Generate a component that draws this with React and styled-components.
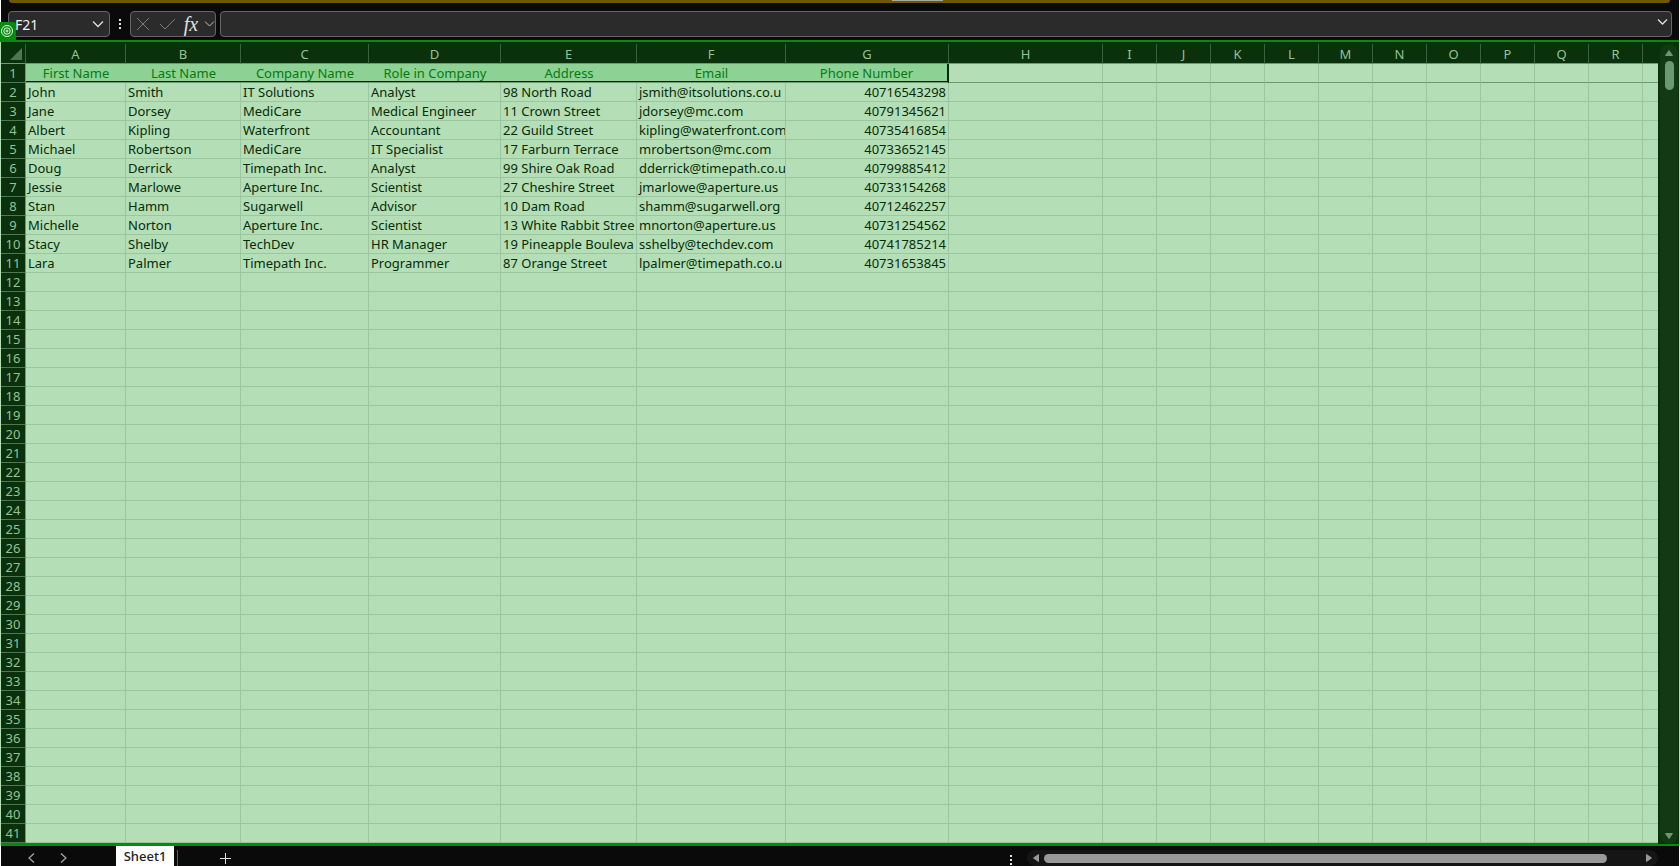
import React from "react";
import styled, { createGlobalStyle } from "styled-components";

const GlobalStyle = createGlobalStyle`
  * { box-sizing: border-box; }
  html { background: #0a0a0a; }
  body { margin: 0; background: #0a0a0a; overflow: hidden; font-family: "Noto Sans", "Open Sans", sans-serif; }
  button, input { font: inherit; color: inherit; background: none; border: 0; padding: 0; margin: 0; outline: none; }
  svg { display: block; flex: none; }
`;

const Window = styled.div`
  position: relative;
  border-left: 1px solid #ffffff;
  border-right: 1px solid #ffffff;
  min-height: 100vh;
  overflow: clip;
  overflow-clip-margin: 1px;
`;

const Banner = styled.div`
  display: flex;
  justify-content: center;
  height: 3px;
  margin: 0 9px 0 8px;
  background: #735600;
  border-radius: 0 0 4px 4px;
  padding-left: 155px;
`;

const BannerHandle = styled.div`
  width: 51px;
  height: 1px;
  background: #a8a8a8;
`;

const FormulaRow = styled.div`
  display: flex;
  align-items: center;
  height: 37px;
  padding: 5px 7px 0 7px;
`;

const Field = styled.div`
  display: flex;
  align-items: center;
  height: 26px;
  margin-right: ${(p) => p.$gap || "0"};
  border: 1px solid #666666;
  border-radius: 4px;
  background: #2b2b2b;
  color: #f2f2f2;
  width: ${(p) => p.$width || "auto"};
  flex: ${(p) => (p.$grow ? "1" : "none")};
  padding: ${(p) => p.$pad || "0"};
`;

const FormulaField = styled(Field)`
  align-items: flex-start;
`;

const TextInput = styled.input`
  flex: 1;
  min-width: 0;
  height: 24px;
  font-size: 14px;
`;

const IconButton = styled.button`
  display: flex;
  align-items: center;
  justify-content: center;
  width: ${(p) => p.$width || "24px"};
  height: ${(p) => p.$height || "24px"};
  color: ${(p) => p.$color || "#e0e0e0"};
`;

const Grip = styled.div`
  display: flex;
  flex-direction: column;
  align-items: center;
  gap: 2px;
  width: 20px;
  i { width: 2px; height: 2px; background: #e4e4e4; }
`;

const Badge = styled.div`
  position: absolute;
  left: -1px;
  top: 22px;
  width: 16px;
  height: 20px;
  padding-top: 2px;
  background: #078a0f;
  border-radius: 0 3px 0 0;
`;

const Workspace = styled.main`
  display: flex;
  border-top: 2px solid #078a0f;
  border-bottom: 2px solid #078a0f;
  background: #0a300c;
  box-shadow: -1px 0 0 #b4deb5, 1px 0 0 #b4deb5;
`;

const GridArea = styled.div`
  flex: 1;
  min-width: 0;
  padding-top: 2px;
  overflow: hidden;
  border-bottom: 1px solid #35653a;
`;

const Sheet = styled.table`
  width: 100%;
  table-layout: fixed;
  border-collapse: separate;
  border-spacing: 0;
  background: #b4deb5;
  color: #082c0b;
  font-size: 13px;
  line-height: 18px;
`;

const Row = styled.tr`
  height: 19px;
`;

const ColumnHead = styled.th`
  height: 20px;
  padding: 0;
  overflow: hidden;
  background: #0a300c;
  color: #92c396;
  font-weight: 400;
  border-right: 1px solid #3a633d;
  border-bottom: 1px solid #6d9a70;
  &:last-child { border-right: 0; }
`;

const RowHead = styled.th`
  padding: 0;
  background: #0a300c;
  color: #92c396;
  font-weight: 400;
  border-right: 1px solid #6d9a70;
  border-bottom: 1px solid #4d7850;
`;

const Cell = styled.td`
  height: 19px;
  padding: 0 2px;
  overflow: hidden;
  white-space: nowrap;
  text-align: ${(p) => (p.$right ? "right" : "left")};
  border-right: 1px solid #9cc6a0;
  border-bottom: 1px solid ${(p) => (p.$underHead ? "#6d9a70" : "#9cc6a0")};
  &:last-child { border-right: 0; }
`;

const TitleCell = styled(Cell)`
  background: #8dd294;
  color: #077a0e;
  text-align: center;
  border-right: ${(p) => (p.$end ? "2px solid #062a08" : "0")};
  border-bottom: 1px solid #6d9a70;
  box-shadow: inset 0 -1px 0 #062a08;
`;

const Corner = styled.div`
  display: flex;
  justify-content: flex-end;
  padding-right: 3px;
`;

const VerticalBar = styled.div`
  display: flex;
  flex-direction: column;
  align-items: center;
  width: 18px;
  margin: 2px 1px 0 2px;
  padding: 1px 0;
  border-radius: 9px;
  background: #123914;
`;

const VerticalThumb = styled.div`
  width: 9px;
  height: 29px;
  border-radius: 5px;
  background: #6b9970;
`;

const Spacer = styled.div`
  flex: 1;
`;

const Footer = styled.footer`
  display: flex;
  align-items: flex-start;
  height: 20px;
  padding: 0 21px 0 14px;
  background: #0a0a0a;
`;

const Tab = styled.button`
  width: 58px;
  height: 20px;
  margin-left: 37px;
  background: #ffffff;
  color: #222222;
  font-size: 13px;
  font-weight: 500;
  line-height: 20px;
`;

const Divider = styled.div`
  width: 1px;
  height: 16px;
  margin: 4px 32px 0 3px;
  background: #5c5c5c;
`;

const FooterGrip = styled(Grip)`
  margin: 9px 6px 0 0;
`;

const HorizontalBar = styled.div`
  display: flex;
  align-items: center;
  flex: 0 0 631px;
  height: 16px;
  margin-top: 4px;
  padding: 0 1px;
  border-radius: 8px;
  background: #151515;
`;

const HorizontalThumb = styled.div`
  width: 563px;
  height: 9px;
  border-radius: 5px;
  background: #999999;
`;

const Line = ({ w, h, d, sw = 1 }) => (
  <svg width={w} height={h} viewBox={`0 0 ${w} ${h}`} fill="none" stroke="currentColor" strokeWidth={sw} aria-hidden="true">
    <path d={d} />
  </svg>
);

const Solid = ({ w, h, d }) => (
  <svg width={w} height={h} viewBox={`0 0 ${w} ${h}`} fill="currentColor" stroke="currentColor" strokeLinejoin="round" aria-hidden="true">
    <path d={d} />
  </svg>
);

const FxLabel = styled.span`
  font-family: "Liberation Serif", serif;
  font-style: italic;
  font-size: 20px;
  line-height: 20px;
`;

const widths = [25, 100, 115, 128, 132, 136, 149, 163, 154, ...Array(10).fill(54)];
const letters = "ABCDEFGHIJKLMNOPQR".split("");
const titles = ["First Name", "Last Name", "Company Name", "Role in Company", "Address", "Email", "Phone Number"];
const people = [
  ["John", "Smith", "IT Solutions", "Analyst", "98 North Road", "jsmith@itsolutions.co.u", "40716543298"],
  ["Jane", "Dorsey", "MediCare", "Medical Engineer", "11 Crown Street", "jdorsey@mc.com", "40791345621"],
  ["Albert", "Kipling", "Waterfront", "Accountant", "22 Guild Street", "kipling@waterfront.com", "40735416854"],
  ["Michael", "Robertson", "MediCare", "IT Specialist", "17 Farburn Terrace", "mrobertson@mc.com", "40733652145"],
  ["Doug", "Derrick", "Timepath Inc.", "Analyst", "99 Shire Oak Road", "dderrick@timepath.co.u", "40799885412"],
  ["Jessie", "Marlowe", "Aperture Inc.", "Scientist", "27 Cheshire Street", "jmarlowe@aperture.us", "40733154268"],
  ["Stan", "Hamm", "Sugarwell", "Advisor", "10 Dam Road", "shamm@sugarwell.org", "40712462257"],
  ["Michelle", "Norton", "Aperture Inc.", "Scientist", "13 White Rabbit Stree", "mnorton@aperture.us", "40731254562"],
  ["Stacy", "Shelby", "TechDev", "HR Manager", "19 Pineapple Bouleva", "sshelby@techdev.com", "40741785214"],
  ["Lara", "Palmer", "Timepath Inc.", "Programmer", "87 Orange Street", "lpalmer@timepath.co.u", "40731653845"],
];
const columnCount = letters.length + 1;
const rowNumbers = Array.from({ length: 41 }, (_, i) => i + 1);

function SheetRow({ number }) {
  const data = number === 1 ? titles : people[number - 2] || [];
  return (
    <Row>
      <RowHead scope="row">{number}</RowHead>
      {Array.from({ length: columnCount }, (_, c) =>
        number === 1 && c < titles.length ? (
          <TitleCell key={c} $end={c === titles.length - 1}>{data[c]}</TitleCell>
        ) : (
          <Cell key={c} $right={c === 6} $underHead={number === 1}>{data[c]}</Cell>
        )
      )}
    </Row>
  );
}

export default function App() {
  return (
    <Window>
      <GlobalStyle />
      <Banner><BannerHandle /></Banner>
      <FormulaRow>
        <Field $width="102px" $pad="0 0 0 6px">
          <TextInput aria-label="Name box" defaultValue="F21" />
          <IconButton aria-label="Open name list" $width="22px"><Line w={12} h={8} sw={1.3} d="M1 1.5 6 6.5 11 1.5" /></IconButton>
        </Field>
        <Grip><i /><i /><i /></Grip>
        <Field $width="86px" $gap="4px">
          <IconButton aria-label="Cancel" $color="#7c7c7c" $width="24px"><Line w={14} h={14} d="M1 1 13 13M13 1 1 13" /></IconButton>
          <IconButton aria-label="Enter" $color="#7c7c7c" $width="24px"><Line w={17} h={12} d="M1 6 6 11 16 1" /></IconButton>
          <IconButton aria-label="Insert function" $width="24px"><FxLabel>fx</FxLabel></IconButton>
          <IconButton aria-label="More functions" $color="#bdbdbd" $width="12px"><Line w={11} h={8} d="M1 1.500 5.500 6 10 1.500" /></IconButton>
        </Field>
        <FormulaField $grow $pad="0 3px 0 6px">
          <TextInput aria-label="Formula bar" />
          <IconButton aria-label="Expand formula bar" $width="12px" $height="20px"><Line w={11} h={8} sw={1.3} d="M1 1.5 5.500 6 10 1.500" /></IconButton>
        </FormulaField>
      </FormulaRow>
      <Workspace>
        <GridArea>
          <Sheet>
            <colgroup>
              {widths.map((w, i) => <col key={i} style={{ width: w }} />)}
              <col />
            </colgroup>
            <thead>
              <tr>
                <ColumnHead>
                  <Corner><svg width="12" height="12" aria-label="Select all"><path d="M12 0V12H0Z" fill="#4d7850" /></svg></Corner>
                </ColumnHead>
                {letters.map((l) => <ColumnHead key={l} scope="col">{l}</ColumnHead>)}
                <ColumnHead />
              </tr>
            </thead>
            <tbody>
              {rowNumbers.map((n) => <SheetRow key={n} number={n} />)}
            </tbody>
          </Sheet>
        </GridArea>
        <VerticalBar>
          <IconButton aria-label="Scroll up" $color="#6b9970" $width="16px" $height="16px"><Solid w={10} h={8} d="M5 1.500 8.500 6.500H1.500Z" /></IconButton>
          <VerticalThumb />
          <Spacer />
          <IconButton aria-label="Scroll down" $color="#6b9970" $width="16px" $height="14px"><Solid w={10} h={8} d="M5 6.500 8.500 1.500H1.500Z" /></IconButton>
        </VerticalBar>
      </Workspace>
      <Footer>
        <IconButton aria-label="Previous sheet" $color="#a8a8a8" $width="32px"><Line w={7} h={10} sw={1.2} d="M6 .5 1 5 6 9.500" /></IconButton>
        <IconButton aria-label="Next sheet" $color="#a8a8a8" $width="32px"><Line w={7} h={10} sw={1.2} d="M1 .5 6 5 1 9.500" /></IconButton>
        <Tab>Sheet1</Tab>
        <Divider />
        <IconButton aria-label="New sheet" $width="30px"><Line w={11} h={11} d="M5.500 0V11M0 5.500H11" /></IconButton>
        <Spacer />
        <FooterGrip><i /><i /><i /></FooterGrip>
        <HorizontalBar>
          <IconButton aria-label="Scroll left" $color="#999999" $width="16px" $height="16px"><Solid w={8} h={10} d="M1.500 5 6.500 1.500V8.500Z" /></IconButton>
          <HorizontalThumb />
          <Spacer />
          <IconButton aria-label="Scroll right" $color="#999999" $width="16px" $height="16px"><Solid w={8} h={10} d="M6.500 5 1.500 1.500V8.500Z" /></IconButton>
        </HorizontalBar>
      </Footer>
      <Badge>
        <svg width="14" height="14" viewBox="0 0 14 14" fill="none" stroke="#e4f7e5" aria-hidden="true">
          <circle cx="7" cy="7" r="5.500" /><circle cx="7" cy="7" r="3.200" /><circle cx="7" cy="7" r="1" />
        </svg>
      </Badge>
    </Window>
  );
}
